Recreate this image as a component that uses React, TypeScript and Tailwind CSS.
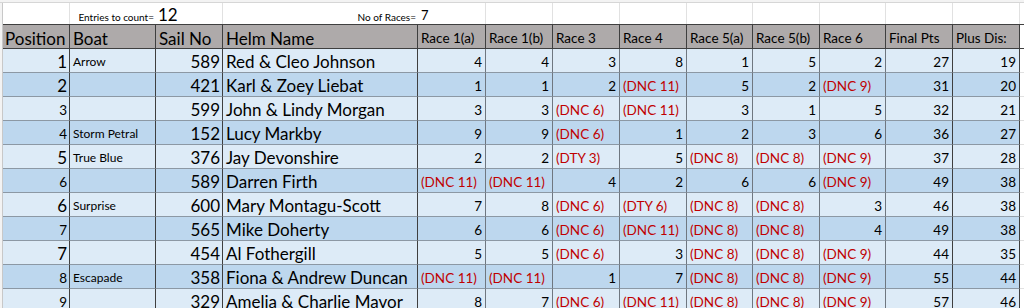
import { FunctionComponent } from "react";

type Row = {
    pos: string;
    bigPos: boolean;
    boat: string;
    sail: string;
    helm: string;
    races: string[];
    total: string;
    dis: string;
};

const rows: Row[] = [
    {pos: "1", bigPos: true, boat: "Arrow", sail: "589", helm: "Red & Cleo Johnson", races: ["4", "4", "3", "8", "1", "5", "2"], total: "27", dis: "19"},
    {pos: "2", bigPos: true, boat: "", sail: "421", helm: "Karl & Zoey Liebat", races: ["1", "1", "2", "(DNC 11)", "5", "2", "(DNC 9)"], total: "31", dis: "20"},
    {pos: "3", bigPos: false, boat: "", sail: "599", helm: "John & Lindy Morgan", races: ["3", "3", "(DNC 6)", "(DNC 11)", "3", "1", "5"], total: "32", dis: "21"},
    {pos: "4", bigPos: false, boat: "Storm Petral", sail: "152", helm: "Lucy Markby", races: ["9", "9", "(DNC 6)", "1", "2", "3", "6"], total: "36", dis: "27"},
    {pos: "5", bigPos: true, boat: "True Blue", sail: "376", helm: "Jay Devonshire", races: ["2", "2", "(DTY 3)", "5", "(DNC 8)", "(DNC 8)", "(DNC 9)"], total: "37", dis: "28"},
    {pos: "6", bigPos: false, boat: "", sail: "589", helm: "Darren Firth", races: ["(DNC 11)", "(DNC 11)", "4", "2", "6", "6", "(DNC 9)"], total: "49", dis: "38"},
    {pos: "6", bigPos: true, boat: "Surprise", sail: "600", helm: "Mary Montagu-Scott", races: ["7", "8", "(DNC 6)", "(DTY 6)", "(DNC 8)", "(DNC 8)", "3"], total: "46", dis: "38"},
    {pos: "7", bigPos: false, boat: "", sail: "565", helm: "Mike Doherty", races: ["6", "6", "(DNC 6)", "(DNC 11)", "(DNC 8)", "(DNC 8)", "4"], total: "49", dis: "38"},
    {pos: "7", bigPos: true, boat: "", sail: "454", helm: "Al Fothergill", races: ["5", "5", "(DNC 6)", "3", "(DNC 8)", "(DNC 8)", "(DNC 9)"], total: "44", dis: "35"},
    {pos: "8", bigPos: false, boat: "Escapade", sail: "358", helm: "Fiona & Andrew Duncan", races: ["(DNC 11)", "(DNC 11)", "1", "7", "(DNC 8)", "(DNC 8)", "(DNC 9)"], total: "55", dis: "44"},
    {pos: "9", bigPos: false, boat: "", sail: "329", helm: "Amelia & Charlie Mavor", races: ["8", "7", "(DNC 6)", "(DNC 11)", "(DNC 8)", "(DNC 8)", "(DNC 9)"], total: "57", dis: "46"},
];

const raceHeads = ["Race 1(a)", "Race 1(b)", "Race 3", "Race 4", "Race 5(a)", "Race 5(b)", "Race 6"];

const cols = "grid grid-cols-[67px_86px_67px_195px_68px_67px_67px_67px_66px_67px_66px_67px_67px_4px]";

const App: FunctionComponent = () => {
    return (
        <div className="w-[1024px] h-[308px] overflow-hidden bg-white font-['Lato',sans-serif] text-black">
            <div className="h-[3px] bg-[#f3f3f3] border-b border-[#d6d6d6]"/>
            <div className="flex">
                <div className="w-[3px] shrink-0 bg-[#f3f3f3] border-r border-[#c8c8c8]"/>
                <div className="flex-1">
                    {/* counts row */}
                    <div className={`${cols} h-[21px]`}>
                        <div className="border-r border-[#e1e1e1]"/>
                        <div className="flex items-end justify-end pr-[2px] pb-[2px] text-[10px] leading-none">
                            Entries to count=
                        </div>
                        <div className="flex items-end pl-[2px] pb-[1px] text-[17px] leading-none border-r border-[#e1e1e1]">
                            12
                        </div>
                        <div className="flex items-end justify-end pr-[2px] pb-[2px] text-[10px] leading-none">
                            No of Races=
                        </div>
                        <div className="flex items-end pl-[3px] pb-[2px] text-[13px] leading-none border-r border-[#e1e1e1]">
                            7
                        </div>
                        {[0, 1, 2, 3, 4, 5, 6, 7].map(i => (
                            <div key={i} className="border-r border-[#e1e1e1]"/>
                        ))}
                        <div/>
                    </div>

                    {/* header row */}
                    <div className={`${cols} h-[25px] bg-[#aeaaaa] border-y border-[#3f3f3f]`}>
                        <div className="flex items-end px-[2px] pb-[1px] text-[17px] leading-none border-r border-[#3f3f3f]">Position</div>
                        <div className="flex items-end px-[3px] pb-[1px] text-[17px] leading-none border-r border-[#3f3f3f]">Boat</div>
                        <div className="flex items-end px-[3px] pb-[1px] text-[17px] leading-none border-r border-[#3f3f3f]">Sail No</div>
                        <div className="flex items-end px-[3px] pb-[1px] text-[17px] leading-none border-r border-[#3f3f3f]">Helm Name</div>
                        {raceHeads.map(h => (
                            <div key={h} className="flex items-end px-[3px] pb-[3px] text-[13.5px] leading-none whitespace-nowrap border-r border-[#3f3f3f]">{h}</div>
                        ))}
                        <div className="flex items-end px-[3px] pb-[3px] text-[13.5px] leading-none whitespace-nowrap border-r border-[#3f3f3f]">Final Pts</div>
                        <div className="flex items-end px-[3px] pb-[3px] text-[13.5px] leading-none whitespace-nowrap border-r border-[#3f3f3f]">Plus Dis:</div>
                        <div className="bg-white"/>
                    </div>

                    {rows.map((r, i) => (
                        <div key={i} className={`${cols} h-[24px]`}>
                            <div className={`flex items-end justify-end px-[2px] leading-none border-r border-b border-r-[#3f3f3f] border-b-[#8c98a4] ${i % 2 ? "bg-[#bdd7ee]" : "bg-[#ddebf7]"} ${r.bigPos ? "text-[17px] pb-[2px]" : "text-[13.5px] pb-[3px]"}`}>
                                {r.pos}
                            </div>
                            <div className={`flex items-end px-[3px] pb-[4px] text-[12px] leading-none whitespace-nowrap border-r border-b border-r-[#3f3f3f] border-b-[#8c98a4] ${i % 2 ? "bg-[#bdd7ee]" : "bg-[#ddebf7]"}`}>
                                {r.boat}
                            </div>
                            <div className={`flex items-end justify-end px-[2px] pb-[2px] text-[17px] leading-none border-r border-b border-r-[#3f3f3f] border-b-[#8c98a4] ${i % 2 ? "bg-[#bdd7ee]" : "bg-[#ddebf7]"}`}>
                                {r.sail}
                            </div>
                            <div className={`flex items-end px-[3px] pb-[2px] text-[17px] leading-none whitespace-nowrap border-r border-b border-r-[#3f3f3f] border-b-[#8c98a4] ${i % 2 ? "bg-[#bdd7ee]" : "bg-[#ddebf7]"}`}>
                                {r.helm}
                            </div>
                            {r.races.map((v, j) => (
                                <div key={j} className={`flex items-end px-[3px] pb-[3px] text-[13.5px] leading-none whitespace-nowrap border-r border-b border-r-[#6f7780] border-b-[#8c98a4] ${i % 2 ? "bg-[#bdd7ee]" : "bg-[#ddebf7]"} ${v.startsWith("(") ? "justify-start text-[#c00000]" : "justify-end"}`}>
                                    {v}
                                </div>
                            ))}
                            <div className={`flex items-end justify-end px-[3px] pb-[3px] text-[13.5px] leading-none border-r border-b border-r-[#3f3f3f] border-b-[#8c98a4] ${i % 2 ? "bg-[#bdd7ee]" : "bg-[#ddebf7]"}`}>
                                {r.total}
                            </div>
                            <div className={`flex items-end justify-end px-[3px] pb-[3px] text-[13.5px] leading-none border-r border-b border-r-[#3f3f3f] border-b-[#8c98a4] ${i % 2 ? "bg-[#bdd7ee]" : "bg-[#ddebf7]"}`}>
                                {r.dis}
                            </div>
                            <div className="bg-white border-b border-[#e1e1e1]"/>
                        </div>
                    ))}
                </div>
            </div>
        </div>
    );
};

export default App;
